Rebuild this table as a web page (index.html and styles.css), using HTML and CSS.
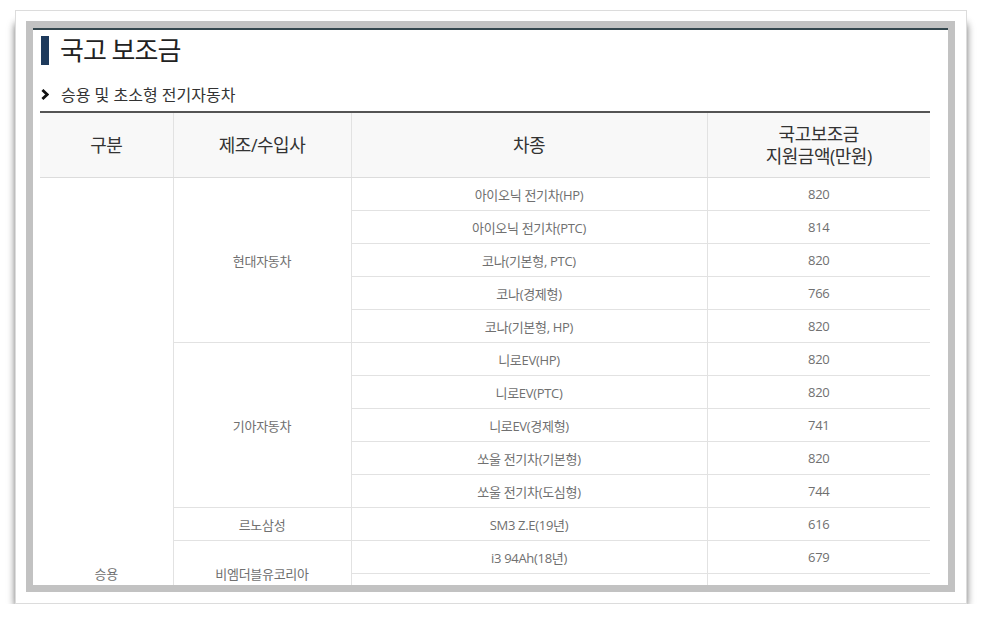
FILE: index.html
```html
<!DOCTYPE html>
<html lang="ko">
<head>
<meta charset="utf-8">
<title>국고 보조금</title>
<link rel="stylesheet" href="styles.css">
</head>
<body>
<div class="frame">
  <div class="mat">
    <div class="content">
      <h2 class="title">국고 보조금</h2>
      <h3 class="subtitle">
        <svg class="chev" width="8" height="11" viewBox="0 0 8 11"><polyline points="1.4,1 6.2,5.5 1.4,10" fill="none" stroke="#111" stroke-width="2.8"/></svg>
        <span>승용 및 초소형 전기자동차</span>
      </h3>
      <table class="sub-table">
        <colgroup>
          <col class="c1"><col class="c2"><col class="c3"><col class="c4">
        </colgroup>
        <thead>
          <tr>
            <th>구분</th>
            <th>제조/수입사</th>
            <th>차종</th>
            <th>국고보조금<br>지원금액(만원)</th>
          </tr>
        </thead>
        <tbody>
          <tr><td rowspan="24">승용</td><td rowspan="5">현대자동차</td><td>아이오닉 전기차(HP)</td><td>820</td></tr>
          <tr><td>아이오닉 전기차(PTC)</td><td>814</td></tr>
          <tr><td>코나(기본형, PTC)</td><td>820</td></tr>
          <tr><td>코나(경제형)</td><td>766</td></tr>
          <tr><td>코나(기본형, HP)</td><td>820</td></tr>
          <tr><td rowspan="5">기아자동차</td><td>니로EV(HP)</td><td>820</td></tr>
          <tr><td>니로EV(PTC)</td><td>820</td></tr>
          <tr><td>니로EV(경제형)</td><td>741</td></tr>
          <tr><td>쏘울 전기차(기본형)</td><td>820</td></tr>
          <tr><td>쏘울 전기차(도심형)</td><td>744</td></tr>
          <tr><td>르노삼성</td><td>SM3 Z.E(19년)</td><td>616</td></tr>
          <tr><td rowspan="2">비엠더블유코리아</td><td>i3 94Ah(18년)</td><td>679</td></tr>
          <tr><td>i3 120Ah(19년)</td><td>727</td></tr>
          <tr><td>한국지엠</td><td>볼트EV</td><td>841</td></tr>
          <tr><td rowspan="2">테슬라</td><td>Model S 75D</td><td>750</td></tr>
          <tr><td>Model S 100D</td><td>750</td></tr>
          <tr><td>재규어랜드로버</td><td>I-PACE</td><td>756</td></tr>
          <tr><td>닛산</td><td>리프</td><td>849</td></tr>
          <tr><td>메르세데스벤츠</td><td>EQC 400 4MATIC</td><td>630</td></tr>
          <tr><td rowspan="2">파워프라자</td><td>라보 피스</td><td>745</td></tr>
          <tr><td>봉고 III EV 피스</td><td>745</td></tr>
          <tr><td>한국지엠</td><td>볼트EV(19년)</td><td>841</td></tr>
          <tr><td>르노삼성</td><td>SM3 Z.E(18년)</td><td>616</td></tr>
          <tr><td>현대자동차</td><td>아이오닉(19년)</td><td>820</td></tr>
        </tbody>
      </table>
    </div>
  </div>
</div>
</body>
</html>
```

FILE: styles.css
```css
html, body {
  margin: 0;
  padding: 0;
  background: #ffffff;
}
body {
  padding: 10px 0 0 15px;
  font-family: "Open Sans", "Noto Sans CJK KR", sans-serif;
}
.frame {
  width: 930px;
  height: 572px;
  padding: 10px;
  border: 1px solid #dcdcdc;
  background: #fff;
  box-shadow: 0 10px 8px -3px rgba(0, 0, 0, 0.45), 6px 8px 8px -6px rgba(0, 0, 0, 0.4), -6px 8px 8px -6px rgba(0, 0, 0, 0.4);
}
.mat {
  border: 7px solid #c2c2c2;
  height: 557px;
  width: 915px;
  background: #fff;
}
.content {
  height: 549px;
  border-top: 2px solid #34474e;
  padding: 6px 0 0 7px;
  overflow: hidden;
}
.title {
  display: flex;
  align-items: center;
  height: 29px;
  margin: 0;
  font-size: 26px;
  font-weight: 400;
  color: #222;
  letter-spacing: -1px;
  line-height: 29px;
}
.title::before {
  content: "";
  width: 8px;
  height: 29px;
  margin: 0 11px 0 1px;
  background: #1e3a5c;
}
.subtitle {
  display: flex;
  align-items: center;
  margin: 19px 0 0 0;
  height: 20px;
  font-size: 16px;
  font-weight: 400;
  color: #333;
  letter-spacing: 0;
}
.chev {
  margin: 0 12px 0 1px;
  flex: none;
}
.sub-table {
  margin-top: 7px;
  width: 890px;
  border-collapse: collapse;
  table-layout: fixed;
}
.c1 { width: 133px; }
.c2 { width: 178px; }
.c3 { width: 356px; }
.c4 { width: 223px; }
.sub-table thead th {
  height: 64px;
  padding: 0;
  background: #f8f8f8;
  border-top: 2px solid #555;
  border-bottom: 1px solid #dcdcdc;
  border-left: 1px solid #e2e2e2;
  font-size: 18px;
  font-weight: 400;
  color: #333;
  line-height: 22px;
  letter-spacing: -0.5px;
}
.sub-table th:first-child {
  border-left: none;
}
.sub-table td {
  height: 32px;
  padding: 0;
  text-align: center;
  vertical-align: middle;
  font-size: 13px;
  color: #707070;
  border-bottom: 1px solid #e2e2e2;
  border-left: 1px solid #e2e2e2;
  letter-spacing: -0.3px;
}
.sub-table tbody tr:first-child td:first-child {
  border-left: none;
}
```
